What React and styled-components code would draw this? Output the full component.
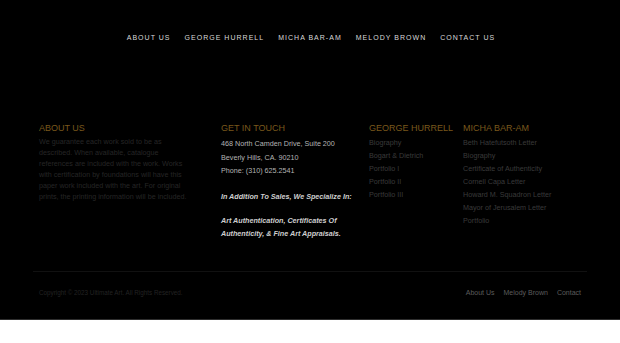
import styled, { createGlobalStyle } from 'styled-components';

const GlobalStyle = createGlobalStyle`
  html, body {
    margin: 0;
    padding: 0;
    background: #fff;
  }
  body {
    font-family: "Liberation Sans", Arial, sans-serif;
  }
`;

const Page = styled.div`
  background: #000;
  height: 320px;
  border-bottom: 1px solid #2e2e2e;
  box-sizing: border-box;
`;

const Nav = styled.nav`
  display: flex;
  justify-content: center;
  gap: 14px;
  height: 44px;
  box-sizing: border-box;
  padding: 32px 0 0 2px;
`;

const NavLink = styled.a`
  font-size: 7px;
  line-height: 12px;
  letter-spacing: 1.02px;
  text-transform: uppercase;
  color: #d8d8d8;
  text-decoration: none;
`;

const Footer = styled.footer`
  padding: 78px 39px 0;
`;

const Columns = styled.div`
  display: grid;
  grid-template-columns: 182px 148px 94px 1fr;
  height: 149px;
`;

const Heading = styled.h4`
  margin: 0;
  font-size: 9px;
  line-height: 12px;
  font-weight: 500;
  color: #7a581c;
  text-transform: uppercase;
`;

const About = styled.p`
  margin: 2px 0 0;
  width: 152px;
  font-size: 7.2px;
  line-height: 11px;
  color: #262626;
`;

const Contact = styled.div`
  margin-top: 3px;
  font-size: 7.2px;
  line-height: 13.5px;
  color: #b4b4b4;
`;

const Special = styled.p`
  margin: ${p => p.$gap}px 0 0;
  font-size: 7.2px;
  line-height: 13px;
  font-style: italic;
  font-weight: bold;
  color: #cfcfcf;
`;

const LinkList = styled.ul`
  list-style: none;
  margin: 1.5px 0 0;
  padding: 0;
`;

const Item = styled.li`
  font-size: 7.2px;
  line-height: 13px;
  color: #3a3a3a;
`;

const Divider = styled.hr`
  margin: 0 -6px;
  border: 0;
  border-top: 1px solid #111;
`;

const Bottom = styled.div`
  display: flex;
  justify-content: space-between;
  align-items: center;
  padding-top: 15px;
`;

const Copy = styled.span`
  font-size: 6.3px;
  line-height: 12px;
  color: #232323;
`;

const BottomLinks = styled.div`
  display: flex;
  gap: 9px;
`;

const BottomLink = styled.a`
  font-size: 7px;
  line-height: 12px;
  color: #5c5c5c;
  text-decoration: none;
`;

const navItems = ['About Us', 'George Hurrell', 'Micha Bar-Am', 'Melody Brown', 'Contact Us'];
const hurrell = ['Biography', 'Bogart & Dietrich', 'Portfolio I', 'Portfolio II', 'Portfolio III'];
const micha = [
  'Beth Hatefutsoth Letter',
  'Biography',
  'Certificate of Authenticity',
  'Cornell Capa Letter',
  'Howard M. Squadron Letter',
  'Mayor of Jerusalem Letter',
  'Portfolio',
];

export default function App() {
  return (
    <>
      <GlobalStyle />
      <Page>
        <Nav>
          {navItems.map(n => <NavLink key={n}>{n}</NavLink>)}
        </Nav>
        <Footer>
          <Columns>
            <div>
              <Heading>About Us</Heading>
              <About>
                We guarantee each work sold to be as described. When available, catalogue
                references are included with the work. Works with certification by foundations
                will have this paper work included with the art. For original prints, the
                printing information will be included.
              </About>
            </div>
            <div>
              <Heading>Get In Touch</Heading>
              <Contact>
                468 North Camden Drive, Suite 200<br />
                Beverly Hills, CA. 90210<br />
                Phone: (310) 625.2541
              </Contact>
              <Special $gap={12}>In Addition To Sales, We Specialize In:</Special>
              <Special $gap={11}>
                Art Authentication, Certificates Of<br />
                Authenticity, &amp; Fine Art Appraisals.
              </Special>
            </div>
            <div>
              <Heading>George Hurrell</Heading>
              <LinkList>
                {hurrell.map(h => <Item key={h}>{h}</Item>)}
              </LinkList>
            </div>
            <div>
              <Heading>Micha Bar-Am</Heading>
              <LinkList>
                {micha.map(m => <Item key={m}>{m}</Item>)}
              </LinkList>
            </div>
          </Columns>
          <Divider />
          <Bottom>
            <Copy>Copyright © 2023 Ultimate Art. All Rights Reserved.</Copy>
            <BottomLinks>
              <BottomLink>About Us</BottomLink>
              <BottomLink>Melody Brown</BottomLink>
              <BottomLink>Contact</BottomLink>
            </BottomLinks>
          </Bottom>
        </Footer>
      </Page>
    </>
  );
}
